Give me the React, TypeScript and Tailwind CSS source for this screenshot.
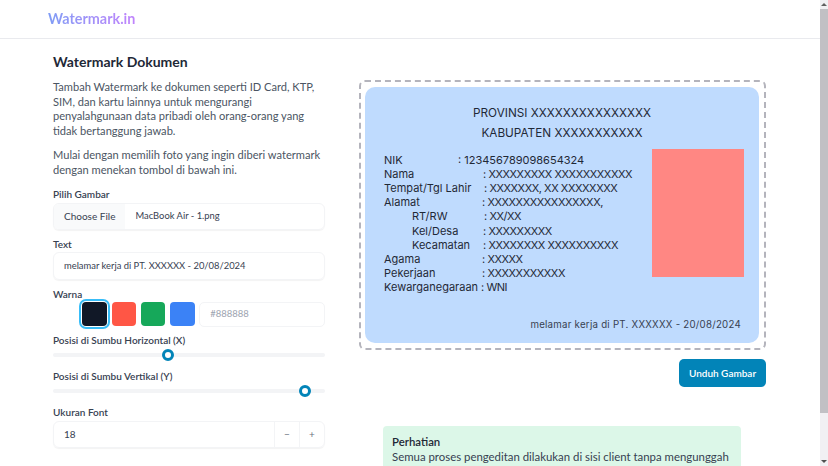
const xFit = "tracking-[-0.45px]";

const rows = [
  { label: "NIK", labelClass: "w-[74px]", value: "123456789098654324", valueClass: "" },
  { label: "Nama", labelClass: "w-[99px]", value: "XXXXXXXXX XXXXXXXXXXX", valueClass: xFit },
  { label: "Tempat/Tgl Lahir", labelClass: "w-[100px]", value: "XXXXXXX, XX XXXXXXXX", valueClass: xFit },
  { label: "Alamat", labelClass: "w-[98px]", value: "XXXXXXXXXXXXXXXX,", valueClass: xFit },
  { label: "RT/RW", labelClass: "ml-[28px] w-[72px]", value: "XX/XX", valueClass: xFit },
  { label: "Kel/Desa", labelClass: "ml-[28px] w-[71px]", value: "XXXXXXXXX", valueClass: xFit },
  { label: "Kecamatan", labelClass: "ml-[28px] w-[71px]", value: "XXXXXXXX XXXXXXXXXX", valueClass: xFit },
  { label: "Agama", labelClass: "w-[98px]", value: "XXXXX", valueClass: xFit },
  { label: "Pekerjaan", labelClass: "w-[98px]", value: "XXXXXXXXXXX", valueClass: xFit },
  { label: "Kewarganegaraan", labelClass: "w-[97px]", value: "WNI", valueClass: xFit },
];

const swatches = ["bg-white", "bg-[#111827]", "bg-[#ff5645]", "bg-[#16a85a]", "bg-[#3b82f6]"];

function Label({ children }: { children: string }) {
  return <p className="h-[14px] text-[10px] leading-[13px] font-semibold text-[#374151]">{children}</p>;
}

function Slider({ pos }: { pos: string }) {
  return (
    <div className="relative mt-[5px] h-[4px] rounded-full bg-[#f3f4f6]">
      <div className={`absolute top-[-4px] h-[12px] w-[12px] rounded-full border-[3px] border-[#0284b8] bg-white ${pos}`} />
    </div>
  );
}

function IdCard() {
  return (
    <div className="h-[256px] w-[394px] rounded-[10px] bg-[#bfdbfe] pt-[16px] pl-[19px] pr-[15px] font-['Inter',sans-serif] text-[#1f2937]">
      <p className="ml-[-19px] w-[394px] text-center text-[11.75px] leading-[20px]">PROVINSI XXXXXXXXXXXXXXX</p>
      <p className="ml-[-19px] w-[394px] text-center text-[11.75px] leading-[20px]">KABUPATEN XXXXXXXXXXX</p>
      <div className="mt-[9.5px] flex">
        <div className="w-[268px] shrink-0">
          {rows.map((r) => (
            <div key={r.label} className="flex h-[14.2px] items-center whitespace-nowrap text-[11px] leading-[14px]">
              <span className={r.labelClass}>{r.label}</span>
              <span className={r.valueClass}>: {r.value}</span>
            </div>
          ))}
        </div>
        <div className="mt-[-4px] h-[128px] w-[92px] bg-[#ff8783]" />
      </div>
      <p className="mt-[24px] whitespace-nowrap pr-[3px] text-right text-[9.7px] leading-[14px] tracking-[0.25px] text-[#374151]">
        melamar kerja di PT. XXXXXX - 20/08/2024
      </p>
    </div>
  );
}

export default function App() {
  return (
    <div className="relative flex h-[466px] w-[828px] overflow-hidden bg-white font-['Lato',sans-serif]">
      <div className="w-[820px]">
        <header className="flex h-[39px] items-center border-b border-[#e9eaee] pl-[48px]">
          <span className="bg-gradient-to-r from-[#7f9cf5] to-[#c084fc] bg-clip-text text-[14.4px] font-bold text-transparent">
            Watermark.in
          </span>
        </header>

        <main className="flex pl-[53px]">
          <section className="w-[272px] pt-[14px]">
            <h1 className="text-[14px] leading-[18px] font-bold text-[#1f2937]">Watermark Dokumen</h1>
            <p className="mt-[9px] whitespace-nowrap text-[11.1px] leading-[14.5px] text-[#4b5563]">
              Tambah Watermark ke dokumen seperti ID Card, KTP,
              <br />
              SIM, dan kartu lainnya untuk mengurangi
              <br />
              penyalahgunaan data pribadi oleh orang-orang yang
              <br />
              tidak bertanggung jawab.
            </p>
            <p className="mt-[10px] whitespace-nowrap text-[11.1px] leading-[14.5px] text-[#4b5563]">
              Mulai dengan memilih foto yang ingin diberi watermark
              <br />
              dengan menekan tombol di bawah ini.
            </p>

            <div className="mt-[11px]">
              <Label>Pilih Gambar</Label>
              <div className="mt-[1px] flex h-[27px] items-center overflow-hidden rounded-[6px] border border-[#f3f4f6] text-[10px] text-[#374151] shadow-[0_1px_1px_rgba(0,0,0,0.05)]">
                <span className="flex h-full items-center bg-[#f9fafb] px-[10px]">Choose File</span>
                <span className="pl-[10px] text-[9.4px]">MacBook Air - 1.png</span>
              </div>
            </div>

            <div className="mt-[8px]">
              <Label>Text</Label>
              <div className="flex h-[28px] items-center rounded-[6px] border border-[#f3f4f6] px-[10px] text-[9.4px] text-[#374151] shadow-[0_1px_1px_rgba(0,0,0,0.05)]">
                melamar kerja di PT. XXXXXX - 20/08/2024
              </div>
            </div>

            <div className="mt-[8px]">
              <Label>Warna</Label>
              <div className="flex h-[24px] items-center">
                {swatches.map((c, i) => (
                  <div
                    key={c}
                    className={`mr-[4.75px] h-[24px] w-[24.5px] rounded-[4px] ${c} ${i === 1 ? "ring-2 ring-[#38bdf8] ring-offset-1" : ""}`}
                  />
                ))}
                <div className="flex h-[25px] flex-1 items-center rounded-[5px] border border-[#f3f4f6] px-[10px] text-[9.5px] text-[#9ca3af]">
                  #888888
                </div>
              </div>
            </div>

            <div className="mt-[8px]">
              <Label>Posisi di Sumbu Horizontal (X)</Label>
              <Slider pos="left-[109px]" />
            </div>
            <div className="mt-[13px]">
              <Label>Posisi di Sumbu Vertikal (Y)</Label>
              <Slider pos="left-[246px]" />
            </div>
            <div className="mt-[13px]">
              <Label>Ukuran Font</Label>
              <div className="mt-[1px] flex h-[27px] items-center rounded-[6px] border border-[#f3f4f6] text-[10px] text-[#374151] shadow-[0_1px_1px_rgba(0,0,0,0.05)]">
                <span className="flex-1 pl-[10px]">18</span>
                <span className="flex h-full w-[25px] items-center justify-center border-l border-[#f3f4f6] text-[#6b7280]">−</span>
                <span className="flex h-full w-[25px] items-center justify-center border-l border-[#f3f4f6] text-[#6b7280]">+</span>
              </div>
            </div>
          </section>

          <section className="ml-[34px] w-[407px] pt-[41px]">
            <div className="rounded-[6px] border-2 border-dashed border-[#b4b4bc] py-[5px] pr-[5px] pl-[4px]">
              <IdCard />
            </div>
            <div className="mt-[9px] flex justify-end">
              <button className="h-[28px] w-[87px] rounded-[5px] bg-[#0284b8] text-[10px] font-semibold text-white">Unduh Gambar</button>
            </div>
            <div className="mt-[39px] ml-[24px] w-[358px] rounded-[4px] bg-[#dcf7e8] px-[9px] pt-[9px] pb-[20px] text-[11.4px] leading-[14.5px] text-[#374151]">
              <p className="font-semibold text-[#1f2937]">Perhatian</p>
              <p className="whitespace-nowrap">Semua proses pengeditan dilakukan di sisi client tanpa mengunggah</p>
            </div>
          </section>
        </main>
      </div>

      <aside className="absolute top-0 right-0 flex h-[466px] w-[8px] flex-col items-center bg-[#f1f0f3]">
        <div className="mt-[3px] h-0 w-0 border-x-[3px] border-b-[3px] border-x-transparent border-b-[#606060]" />
        <div className="mt-[3px] h-[404px] w-full bg-[#c1c0c4]" />
        <div className="mt-auto mb-[3px] h-0 w-0 border-x-[3px] border-t-[3px] border-x-transparent border-t-[#505050]" />
      </aside>
    </div>
  );
}
